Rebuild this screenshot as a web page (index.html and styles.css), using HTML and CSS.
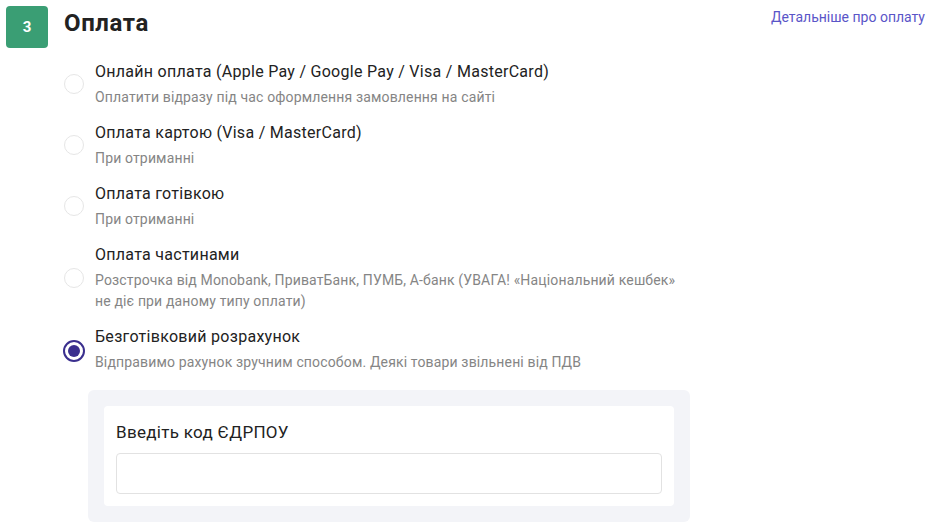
FILE: index.html
```html
<!DOCTYPE html>
<html lang="uk">
<head>
    <meta charset="UTF-8">
    <meta name="viewport" content="width=device-width, initial-scale=1.0">
    <title>Оплата</title>
    <link rel="stylesheet" href="styles.css">
</head>
<body>
    <div class="section">
        <div class="section-head">
            <div class="step-num">3</div>
            <h2 class="section-title">Оплата</h2>
            <a class="more-link" href="#">Детальніше про оплату</a>
        </div>

        <div class="options">
            <label class="option">
                <span class="radio"></span>
                <span class="option-text">
                    <span class="option-name">Онлайн оплата (Apple Pay / Google Pay / Visa / MasterCard)</span>
                    <span class="option-desc">Оплатити відразу під час оформлення замовлення на сайті</span>
                </span>
            </label>
            <label class="option">
                <span class="radio"></span>
                <span class="option-text">
                    <span class="option-name">Оплата картою (Visa / MasterCard)</span>
                    <span class="option-desc">При отриманні</span>
                </span>
            </label>
            <label class="option">
                <span class="radio"></span>
                <span class="option-text">
                    <span class="option-name">Оплата готівкою</span>
                    <span class="option-desc">При отриманні</span>
                </span>
            </label>
            <label class="option">
                <span class="radio"></span>
                <span class="option-text">
                    <span class="option-name">Оплата частинами</span>
                    <span class="option-desc">Розстрочка від Monobank, ПриватБанк, ПУМБ, А-банк (УВАГА! «Національний кешбек» не діє при даному типу оплати)</span>
                </span>
            </label>
            <label class="option">
                <span class="radio checked"></span>
                <span class="option-text">
                    <span class="option-name">Безготівковий розрахунок</span>
                    <span class="option-desc">Відправимо рахунок зручним способом. Деякі товари звільнені від ПДВ</span>
                </span>
            </label>
        </div>

        <div class="extra">
            <div class="extra-card">
                <div class="field-label">Введіть код ЄДРПОУ</div>
                <input class="field-input" type="text">
            </div>
        </div>
    </div>
</body>
</html>
```

FILE: styles.css
```css
body {
    margin: 0;
    padding: 6px 5px 0 6px;
    font-family: Roboto, 'Noto Sans', sans-serif;
    color: #222;
    background: #fff;
}

.section-head {
    display: flex;
    align-items: flex-start;
}

.step-num {
    width: 42px;
    height: 42px;
    border-radius: 4px;
    background: #3a9e74;
    color: #fff;
    font-weight: 700;
    font-size: 15px;
    display: flex;
    align-items: center;
    justify-content: center;
    flex-shrink: 0;
}

.section-title {
    margin: -1px 0 0 16px;
    font-size: 24px;
    font-weight: 700;
    line-height: 36px;
    letter-spacing: 0.6px;
}

.more-link {
    margin-left: auto;
    margin-top: 1px;
    font-size: 14px;
    line-height: 20px;
    color: #5a55c8;
    text-decoration: none;
}

.options {
    margin-top: 12px;
    padding-left: 58px;
    width: 620px;
}

.option {
    display: flex;
    align-items: center;
    margin-bottom: 13px;
    cursor: pointer;
}

.radio {
    width: 20px;
    height: 20px;
    border: 1px solid #e6e6e6;
    border-radius: 50%;
    box-sizing: border-box;
    flex-shrink: 0;
    margin-right: 11px;
    position: relative;
}

.radio.checked {
    width: 22px;
    height: 22px;
    border: 2px solid #3a2f8e;
    margin: 4px 10px 0 -1px;
}

.radio.checked::after {
    content: "";
    position: absolute;
    left: 3px;
    top: 3px;
    width: 12px;
    height: 12px;
    border-radius: 50%;
    background: #3a2f8e;
}

.option-text {
    display: flex;
    flex-direction: column;
}

.option-name {
    font-size: 16px;
    line-height: 24px;
    letter-spacing: 0.28px;
    color: #222;
}

.option-desc {
    font-size: 14px;
    line-height: 21px;
    letter-spacing: 0.15px;
    color: #858585;
    margin-top: 3px;
}

.extra {
    margin: 17px 0 0 82px;
    width: 570px;
    padding: 16px;
    background: #f3f4f8;
    border-radius: 6px;
}

.extra-card {
    background: #fff;
    border-radius: 4px;
    padding: 14px 12px 12px;
}

.field-label {
    font-size: 17px;
    line-height: 24px;
    font-weight: 400;
    letter-spacing: 0.3px;
    margin-bottom: 9px;
}

.field-input {
    display: block;
    width: 100%;
    height: 41px;
    box-sizing: border-box;
    border: 1px solid #e2e2e2;
    border-radius: 4px;
    font-family: inherit;
    font-size: 15px;
    padding: 0 12px;
}
```
